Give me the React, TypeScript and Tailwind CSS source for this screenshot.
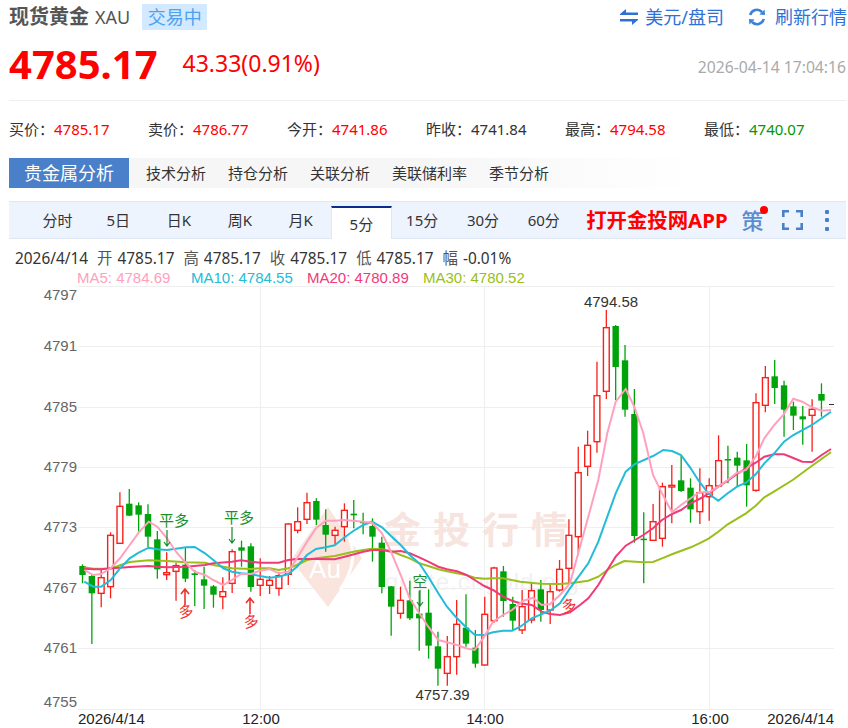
import React from 'react';

type Row = [number, number, number, number, number];
type Pt = [number, number];

const UP = '#f8201a';
const DOWN = '#00a30a';

// candle rows are [wick top, wick bottom, body top, body bottom, up]
// sampled on a 3x grid, origin y given per block
const toY = (oy: number, rows: Row[]): Row[] =>
  rows.map(([a, b, c, d, u]) => [oy + a / 3, oy + b / 3, oy + c / 3, oy + d / 3, u]);

const candles: Row[] = [
  ...toY(470, [
    [283, 340, 288, 315, 0], [315, 522, 318, 370, 0], [300, 412, 323, 370, 1], [187, 385, 196, 350, 1],
    [67, 222, 109, 220, 1], [57, 138, 101, 137, 0], [97, 185, 106, 134, 0], [103, 232, 132, 200, 0],
    [183, 326, 208, 298, 0], [247, 330, 308, 314, 1], [278, 392, 287, 304, 1], [232, 336, 284, 326, 0],
    [300, 408, 310, 315, 0], [290, 417, 328, 347, 0], [345, 413, 349, 374, 0], [322, 418, 365, 380, 1],
    [238, 369, 245, 340, 1], [212, 290, 232, 242, 0], [220, 365, 229, 351, 0], [265, 378, 328, 346, 1],
    [318, 372, 331, 346, 1], [305, 377, 317, 355, 1], [160, 345, 162, 313, 1], [112, 190, 155, 181, 1],
    [68, 162, 98, 148, 1], [85, 165, 93, 149, 0], [118, 245, 165, 194, 0], [170, 225, 181, 196, 1],
    [100, 215, 121, 170, 1], [90, 175, 131, 136, 0], [128, 193, 155, 158, 0], [145, 275, 168, 200, 0],
    [200, 370, 218, 351, 0], [348, 497, 349, 410, 0], [350, 446, 391, 430, 1], [332, 450, 391, 445, 0],
    [362, 542, 431, 445, 0], [358, 566, 428, 527, 0], [485, 647, 529, 596, 0], [498, 647, 560, 610, 1],
    [390, 614, 463, 560, 1], [373, 530, 473, 521, 0], [480, 593, 533, 581, 0], [380, 587, 433, 585, 1],
    [290, 458, 294, 452, 1], [288, 440, 304, 393, 0], [380, 482, 402, 452, 0],
  ]),
  ...toY(290, [
    [900, 1032, 950, 1020, 1], [878, 1000, 902, 990, 1], [870, 995, 898, 960, 0], [880, 1002, 905, 960, 1],
    [810, 905, 838, 900, 1], [688, 885, 736, 835, 1], [470, 795, 548, 740, 1], [422, 558, 466, 529, 1],
    [215, 488, 317, 455, 1], [60, 327, 113, 304, 1], [105, 330, 108, 231, 0], [165, 380, 211, 359, 0],
    [297, 758, 372, 738, 0], [667, 880, 746, 749, 0], [642, 752, 695, 751, 1], [578, 770, 590, 745, 1],
    [525, 700, 586, 591, 1], [495, 606, 571, 603, 0], [565, 698, 593, 658, 0], [535, 702, 608, 665, 1],
    [565, 692, 587, 620, 1], [436, 590, 512, 588, 1], [467, 580, 507, 509, 0], [485, 588, 503, 527, 0],
    [462, 650, 511, 586, 0], [310, 605, 338, 601, 1], [228, 367, 263, 346, 1], [210, 342, 259, 294, 0],
    [272, 440, 286, 359, 0], [335, 420, 349, 377, 0], [348, 464, 379, 388, 0], [328, 485, 358, 376, 1],
    [280, 380, 312, 332, 0],
  ]),
];

const pts = (ox: number, oy: number, list: Pt[]) =>
  list.map(([x, y]) => `${(ox + x / 3).toFixed(1)},${(oy + y / 3).toFixed(1)}`).join(' ');

const line = (a: Pt[], b: Pt[], c: Pt[]) => `${pts(40, 470, a)} ${pts(260, 470, b)} ${pts(500, 290, c)}`;

const ma5 = line(
  [[133, 300], [160, 315], [183, 312], [212, 295], [240, 265], [269, 225], [296, 188], [326, 155], [352, 170], [381, 205], [408, 245], [438, 280], [464, 305], [495, 315], [520, 330], [550, 345], [576, 330], [603, 312], [633, 312], [660, 302], [689, 297], [716, 310], [745, 305], [771, 265]],
  [[141, 215], [168, 175], [197, 152], [224, 152], [254, 150], [310, 155], [336, 158], [366, 190], [393, 245], [422, 315], [449, 385], [478, 430], [505, 470], [535, 510], [561, 517], [591, 525], [618, 535], [644, 540], [673, 500], [699, 455], [729, 435], [756, 420], [789, 393]],
  [[99, 923], [125, 945], [150, 942], [180, 915], [210, 880], [240, 770], [265, 680], [295, 570], [322, 430], [347, 335], [377, 297], [403, 350], [430, 430], [459, 555], [486, 610], [516, 667], [543, 645], [572, 625], [598, 607], [627, 607], [655, 590], [683, 570], [711, 548], [738, 540], [767, 500], [793, 445], [823, 405], [850, 375], [880, 326], [907, 335], [936, 352], [965, 362], [993, 360]],
);
const ma10 = line(
  [[133, 335], [160, 350], [183, 350], [212, 330], [240, 295], [269, 265], [296, 248], [326, 233], [352, 238], [381, 240], [408, 236], [438, 232], [464, 231], [495, 250], [520, 270], [550, 295], [576, 305], [603, 310], [633, 312], [660, 318], [689, 323], [716, 320], [745, 312], [771, 290]],
  [[141, 255], [168, 237], [197, 232], [224, 226], [254, 202], [280, 183], [310, 165], [336, 155], [366, 172], [393, 198], [422, 225], [449, 255], [478, 280], [505, 320], [535, 370], [561, 410], [591, 445], [618, 472], [644, 494], [673, 495], [699, 487], [729, 482], [756, 482], [781, 470]],
  [[95, 985], [150, 962], [180, 940], [210, 895], [265, 820], [295, 755], [322, 680], [347, 610], [377, 545], [403, 523], [459, 498], [490, 480], [516, 483], [543, 495], [572, 535], [598, 575], [627, 612], [655, 632], [683, 610], [711, 590], [738, 578], [767, 553], [793, 520], [823, 490], [852, 455], [880, 435], [936, 405], [993, 365]],
);
const ma20 = line(
  [[133, 296], [160, 298], [183, 298], [212, 295], [240, 293], [269, 291], [326, 288], [352, 290], [381, 292], [438, 290], [495, 285], [520, 280], [576, 275], [603, 271], [633, 275], [660, 278], [716, 278], [745, 270], [771, 267]],
  [[168, 267], [224, 268], [254, 260], [310, 245], [336, 240], [366, 240], [393, 245], [422, 243], [449, 250], [478, 262], [505, 275], [535, 290], [561, 298], [591, 304], [618, 314], [644, 330], [673, 348], [699, 360], [729, 380], [756, 392], [781, 400]],
  [[95, 945], [125, 965], [150, 972], [180, 975], [210, 967], [240, 945], [265, 925], [295, 885], [322, 840], [347, 800], [377, 767], [430, 735], [459, 715], [486, 690], [516, 672], [543, 660], [572, 640], [598, 627], [627, 610], [655, 590], [683, 572], [711, 552], [738, 535], [767, 518], [793, 500], [823, 493], [852, 493], [880, 504], [907, 515], [936, 516], [965, 495], [993, 477]],
);
const ma30 = line(
  [[133, 292], [160, 296], [212, 296], [240, 286], [269, 276], [326, 271], [381, 273], [438, 277], [495, 278], [520, 285], [550, 290], [576, 295], [633, 297], [660, 295], [689, 295], [716, 300], [745, 295], [771, 285]],
  [[141, 270], [168, 265], [224, 258], [280, 245], [310, 240], [336, 236], [366, 238], [393, 243], [422, 255], [449, 265], [478, 280], [505, 288], [535, 298], [561, 304], [591, 310], [618, 315], [644, 323], [673, 326], [699, 325], [729, 325], [781, 335]],
  [[122, 881], [180, 882], [210, 880], [265, 872], [295, 860], [322, 840], [347, 825], [373, 813], [430, 817], [459, 816], [486, 805], [516, 793], [572, 772], [598, 760], [627, 745], [655, 725], [683, 703], [738, 670], [767, 647], [793, 622], [823, 604], [878, 570], [936, 527], [993, 487]],
);

const stats = [
  { label: '买价：', value: '4785.17', color: 'text-[#ff0000]' },
  { label: '卖价：', value: '4786.77', color: 'text-[#ff0000]' },
  { label: '今开：', value: '4741.86', color: 'text-[#ff0000]' },
  { label: '昨收：', value: '4741.84', color: 'text-[#333333]' },
  { label: '最高：', value: '4794.58', color: 'text-[#ff0000]' },
  { label: '最低：', value: '4740.07', color: 'text-[#009900]' },
];

const subNav = ['技术分析', '持仓分析', '关联分析', '美联储利率', '季节分析'];
const periods = ['分时', '5日', '日K', '周K', '月K', '5分', '15分', '30分', '60分'];
const yLabels = [
  ['4797', 300], ['4791', 351], ['4785', 412], ['4779', 472], ['4773', 532], ['4767', 593], ['4761', 653], ['4755', 707],
] as const;
const gridY = [286.5, 346.5, 407.5, 467.5, 527.5, 588.5, 648.5, 709.5];
const gridX = [260.5, 484.5, 709.5];

const SwapIcon = () => (
  <svg width="18" height="16" viewBox="0 0 18 16" fill="#2f72d6">
    <path d="M0 5 L6 0 V3.4 H18 V6 H0 Z" />
    <path d="M18 11 L12 16 V12.6 H0 V10 H18 Z" />
  </svg>
);

const RefreshIcon = () => (
  <svg width="20" height="20" viewBox="0 0 20 20" fill="none">
    <path d="M3.2 8 A7 7 0 0 1 15 5" stroke="#3b82d8" strokeWidth="2.6" />
    <path d="M16.8 12 A7 7 0 0 1 5 15" stroke="#3b82d8" strokeWidth="2.6" />
    <path d="M12.4 7.4 L18 8 L17.6 2.4 Z" fill="#3b82d8" />
    <path d="M7.6 12.6 L2 12 L2.4 17.6 Z" fill="#3b82d8" />
  </svg>
);

const FullscreenIcon = () => (
  <svg width="21" height="20" viewBox="0 0 21 20" fill="none" stroke="#4a80c9" strokeWidth="2.6">
    <path d="M1.3 7 V1.3 H7 M14 1.3 H19.7 V7 M19.7 13 V18.7 H14 M7 18.7 H1.3 V13" />
  </svg>
);

const Chart = () => (
  <svg viewBox="0 285 848 443" width="848" height="443" className="block font-['Liberation_Sans',Arial,sans-serif]">
    {gridY.map((y) => (
      <line key={y} x1="78" x2="834" y1={y} y2={y} stroke="#eeeeee" />
    ))}
    {gridX.map((x) => (
      <line key={x} x1={x} x2={x} y1="286" y2="709" stroke="#eeeeee" />
    ))}

    {/* watermark */}
    <path d="M328 507 L362 558 L328 607 L291 560 Z" fill="#f9e4de" />
    <path d="M346 532 Q362 558 340 590" fill="none" stroke="#ffffff" strokeWidth="3" />
    <text x="325" y="578" fontSize="26" fill="#ffffff" textAnchor="middle">Au</text>
    <text x="384" y="544" fontSize="37" fontWeight="700" letterSpacing="12" fill="#f7e4de" className="font-['Noto_Sans_CJK_SC',sans-serif]">金投行情</text>
    <text x="385" y="590" fontSize="24" letterSpacing="1" fill="#f1f1f1">quote.cngold.org</text>

    {candles.map(([hi, lo, top, bottom, up], i) => {
      const x = 82.5 + i * 9.354;
      const color = up ? UP : DOWN;
      const h = Math.max(bottom - top, 1.5);
      return (
        <g key={i}>
          <line x1={x} x2={x} y1={hi} y2={lo} stroke={color} strokeWidth="1.3" />
          {up ? (
            <rect x={x - 2.9} y={top} width="5.8" height={h} fill="#ffffff" stroke={color} strokeWidth="1.4" />
          ) : (
            <rect x={x - 3.2} y={top} width="6.4" height={h} fill={color} />
          )}
        </g>
      );
    })}

    <polyline points={ma30} fill="none" stroke="#9abf1a" strokeWidth="2" />
    <polyline points={ma20} fill="none" stroke="#f03a78" strokeWidth="2" />
    <polyline points={ma10} fill="none" stroke="#22bcd8" strokeWidth="2" />
    <polyline points={ma5} fill="none" stroke="#ffa1bd" strokeWidth="2" />

    {/* trade marks */}
    <g className="font-['Noto_Sans_CJK_SC',sans-serif]" fontSize="15" textAnchor="middle">
      <text x="174" y="526" fill="#1c8f2c">平多</text>
      <text x="239" y="523" fill="#1c8f2c">平多</text>
      <text x="420" y="587" fill="#1c8f2c">空</text>
      <text x="186" y="617" fill="#f03030" transform="rotate(-8 186 612)">多</text>
      <text x="251" y="627" fill="#f03030" transform="rotate(-8 251 621)">多</text>
      <text x="569" y="611" fill="#f03030" transform="rotate(-14 569 606)">多</text>
    </g>
    <g fill="none" strokeWidth="1.2">
      <path d="M167 530 V546 M164 542 L167 546 L170 542" stroke="#14882a" />
      <path d="M232 527 V543 M229 539 L232 543 L235 539" stroke="#14882a" />
      <path d="M420 590 V606 M417 602 L420 606 L423 602" stroke="#14882a" />
      <path d="M185 605 V589 M181 594 L185 589 L189 594" stroke="#f03030" strokeWidth="1.6" />
      <path d="M250 614 V598 M246 603 L250 598 L254 603" stroke="#f03030" strokeWidth="1.6" />
    </g>

    <line x1="829" x2="834" y1="404.5" y2="404.5" stroke="#333333" strokeWidth="1" />

    {yLabels.map(([t, y]) => (
      <text key={t} x="77" y={y} fontSize="15" fill="#666666" textAnchor="end">{t}</text>
    ))}
    <text x="611" y="307" fontSize="15" fill="#333333" textAnchor="middle">4794.58</text>
    <text x="442.5" y="700" fontSize="15" fill="#333333" textAnchor="middle">4757.39</text>
    <g fontSize="15" fill="#222222">
      <text x="78" y="724">2026/4/14</text>
      <text x="261" y="724" textAnchor="middle">12:00</text>
      <text x="485" y="724" textAnchor="middle">14:00</text>
      <text x="710" y="724" textAnchor="middle">16:00</text>
      <text x="834" y="724" textAnchor="end">2026/4/14</text>
    </g>
  </svg>
);

export default function App() {
  return (
    <div className="w-[848px] h-[728px] overflow-hidden bg-white text-[#333333] font-['Noto_Sans','Noto_Sans_CJK_SC',sans-serif]">
      <div className="flex items-center justify-between h-[36px] pl-[9px] pr-[1px] pb-[2px]">
        <div className="flex items-center">
          <span className="text-[20px] font-bold text-[#555555]">现货黄金</span>
          <span className="ml-[6px] text-[18px] text-[#555555]">XAU</span>
          <span className="ml-[12px] w-[65px] h-[26px] flex items-center justify-center bg-[#d3e9ff] text-[#4ba2f0] text-[18px]">交易中</span>
        </div>
        <div className="flex items-center text-[18px] text-[#2f72d6]">
          <SwapIcon />
          <span className="ml-[7px]">美元/盘司</span>
          <span className="ml-[23px]"><RefreshIcon /></span>
          <span className="ml-[8px]">刷新行情</span>
        </div>
      </div>

      <div className="flex items-center h-[65px] ml-[9px] mr-[2px] border-b border-[#eeeeee]">
        <span className="text-[40px] leading-none font-bold text-[#ff0000] pb-[9px]">4785.17</span>
        <span className="ml-[25px] text-[23px] leading-none text-[#ff0000] pb-[9px]">43.33(0.91%)</span>
        <span className="ml-auto text-[15.7px] text-[#aaaaaa]">2026-04-14 17:04:16</span>
      </div>

      <div className="flex items-center h-[57px] pl-[9px] text-[15px]">
        {stats.map((s) => (
          <div key={s.label} className="w-[139px] flex-none">
            <span>{s.label}</span>
            <span className={s.color}>{s.value}</span>
          </div>
        ))}
      </div>

      <div className="flex items-center h-[30px] ml-[9px] w-[690px] bg-gradient-to-r from-[#f6f6f6] from-60% to-white text-[15px]">
        <div className="w-[120px] h-full flex items-center justify-center bg-[#4a80c9] text-white text-[18px]">贵金属分析</div>
        <div className="flex items-center gap-[22px] ml-[17px]">
          {subNav.map((n) => (
            <span key={n}>{n}</span>
          ))}
        </div>
      </div>

      <div className="flex items-end h-[38px] mt-[13px] ml-[9px] mr-[2px] pl-[18px] bg-[#eef4fe] border-y border-[#dfe7f5] text-[15px]">
        {periods.map((p) => (
          <div
            key={p}
            className={
              p === '5分'
                ? 'w-[60.8px] h-[33px] -mb-px pt-[1px] flex items-center justify-center bg-white border-t-2 border-x border-t-[#0a2c8c] border-x-[#dfe7f5]'
                : 'w-[60.8px] h-[36px] pt-[1px] flex items-center justify-center'
            }
          >
            {p}
          </div>
        ))}
        <span className="self-center ml-[12px] text-[20.4px] font-bold text-[#ff0000] whitespace-nowrap">打开金投网APP</span>
        <div className="self-center relative ml-[14px] text-[22px] leading-none font-medium text-[#5a8dd0]">
          策
          <span className="absolute -top-[3px] -right-[4px] w-[8px] h-[8px] rounded-full bg-[#ff0000]" />
        </div>
        <div className="self-center ml-[18px]"><FullscreenIcon /></div>
        <div className="self-center ml-[22px] flex flex-col gap-[4.5px]">
          <span className="w-[4px] h-[4px] rounded-[1px] bg-[#4a80c9]" />
          <span className="w-[4px] h-[4px] rounded-[1px] bg-[#4a80c9]" />
          <span className="w-[4px] h-[4px] rounded-[1px] bg-[#4a80c9]" />
        </div>
      </div>

      <div className="flex items-center h-[34px] pt-[5px] pl-[15px] text-[15.4px] whitespace-nowrap">
        <span>2026/4/14</span>
        <span className="ml-[9px] text-[#555555]">开</span><span className="ml-[5px]">4785.17</span>
        <span className="ml-[9px] text-[#555555]">高</span><span className="ml-[5px]">4785.17</span>
        <span className="ml-[9px] text-[#555555]">收</span><span className="ml-[5px]">4785.17</span>
        <span className="ml-[9px] text-[#555555]">低</span><span className="ml-[5px]">4785.17</span>
        <span className="ml-[9px] text-[#555555]">幅</span><span className="ml-[5px]">-0.01%</span>
      </div>
      <div className="flex items-center h-[10px] mb-[2px] pl-[77px] text-[15px] font-['Liberation_Sans',Arial,sans-serif] whitespace-nowrap">
        <span className="w-[114px] text-[#ffa1bd]">MA5: 4784.69</span>
        <span className="w-[116px] text-[#22bcd8]">MA10: 4784.55</span>
        <span className="w-[116px] text-[#f03a78]">MA20: 4780.89</span>
        <span className="text-[#9abf1a]">MA30: 4780.52</span>
      </div>

      <Chart />
    </div>
  );
}
